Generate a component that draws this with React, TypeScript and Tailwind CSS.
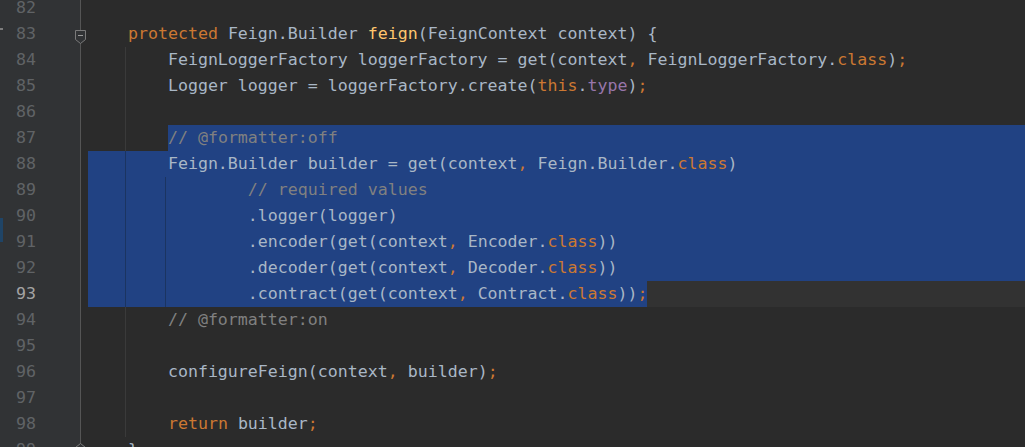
import React from "react";

type Tok = [string, string];
const T = "text-[#a9b7c6]";
const K = "text-[#cc7832]";
const F = "text-[#ffc66d]";
const C = "text-[#808080]";
const P = "text-[#9876aa]";

type Line = {
  n: number;
  toks: Tok[];
  sel?: "full" | "from8" | "upto";
  g1?: boolean;
  g2?: boolean;
  caret?: boolean;
};

const lines: Line[] = [
  { n: 82, toks: [] },
  {
    n: 83,
    toks: [
      ["    ", T],
      ["protected", K],
      [" Feign.Builder ", T],
      ["feign", F],
      ["(FeignContext context) {", T],
    ],
  },
  {
    n: 84,
    g1: true,
    toks: [
      ["        FeignLoggerFactory loggerFactory = get(context", T],
      [",", K],
      [" FeignLoggerFactory.", T],
      ["class", K],
      [")", T],
      [";", K],
    ],
  },
  {
    n: 85,
    g1: true,
    toks: [
      ["        Logger logger = loggerFactory.create(", T],
      ["this", K],
      [".", T],
      ["type", P],
      [")", T],
      [";", K],
    ],
  },
  { n: 86, g1: true, toks: [] },
  { n: 87, g1: true, sel: "from8", toks: [["// @formatter:off", C]] },
  {
    n: 88,
    g1: true,
    sel: "full",
    toks: [
      ["        Feign.Builder builder = get(context", T],
      [",", K],
      [" Feign.Builder.", T],
      ["class", K],
      [")", T],
    ],
  },
  { n: 89, g1: true, g2: true, sel: "full", toks: [["                // required values", C]] },
  { n: 90, g1: true, g2: true, sel: "full", toks: [["                .logger(logger)", T]] },
  {
    n: 91,
    g1: true,
    g2: true,
    sel: "full",
    toks: [
      ["                .encoder(get(context", T],
      [",", K],
      [" Encoder.", T],
      ["class", K],
      ["))", T],
    ],
  },
  {
    n: 92,
    g1: true,
    g2: true,
    sel: "full",
    toks: [
      ["                .decoder(get(context", T],
      [",", K],
      [" Decoder.", T],
      ["class", K],
      ["))", T],
    ],
  },
  {
    n: 93,
    g1: true,
    g2: true,
    sel: "upto",
    caret: true,
    toks: [
      ["                .contract(get(context", T],
      [",", K],
      [" Contract.", T],
      ["class", K],
      ["))", T],
      [";", K],
    ],
  },
  { n: 94, g1: true, toks: [["        // @formatter:on", C]] },
  { n: 95, g1: true, toks: [] },
  {
    n: 96,
    g1: true,
    toks: [
      ["        configureFeign(context", T],
      [",", K],
      [" builder)", T],
      [";", K],
    ],
  },
  { n: 97, g1: true, toks: [] },
  {
    n: 98,
    g1: true,
    toks: [
      ["        ", T],
      ["return", K],
      [" builder", T],
      [";", K],
    ],
  },
  { n: 99, toks: [["    }", T]] },
];

function Toks({ toks }: { toks: Tok[] }) {
  return (
    <>
      {toks.map((t, i) => (
        <span key={i} className={t[1]}>
          {t[0]}
        </span>
      ))}
    </>
  );
}

function Row({ l }: { l: Line }) {
  const selBg = "bg-[#214283]";
  let inner: React.ReactNode;
  if (l.sel === "full") {
    inner = (
      <div className={`flex-1 ${selBg}`}>
        <Toks toks={l.toks} />
      </div>
    );
  } else if (l.sel === "from8") {
    inner = (
      <div className="flex flex-1">
        <span>{"        "}</span>
        <span className={`flex-1 ${selBg}`}>
          <Toks toks={l.toks} />
        </span>
      </div>
    );
  } else if (l.sel === "upto") {
    inner = (
      <div className="flex flex-1 bg-[#323232]">
        <span className={selBg}>
          <Toks toks={l.toks} />
        </span>
      </div>
    );
  } else {
    inner = (
      <div className="flex-1">
        <Toks toks={l.toks} />
      </div>
    );
  }
  const onSel = !!l.sel && l.sel !== "from8";
  return (
    <div className="flex h-[26px] leading-[26px]">
      <div className="relative w-[81px] shrink-0 border-r border-[#555555] bg-[#313335]">
        <div
          className={`w-[36px] text-right ${
            l.caret ? "text-[#a4a3a3]" : "text-[#606366]"
          }`}
        >
          {l.n}
        </div>
        {l.n === 83 && (
          <svg
            className="absolute left-[74px] top-[8px] z-10"
            width="13"
            height="16"
            viewBox="0 0 13 16"
          >
            <path
              d="M1.5 1.5 H11.5 V10.5 L6.5 14.5 L1.5 10.5 Z"
              fill="#313335"
              stroke="#7a7a7a"
              strokeWidth="1"
            />
            <path d="M4 6.5 H9" stroke="#9a9a9a" strokeWidth="1" />
          </svg>
        )}
        {l.n === 99 && (
          <svg
            className="absolute left-[74px] top-[5px] z-10"
            width="13"
            height="16"
            viewBox="0 0 13 16"
          >
            <path
              d="M1.5 14.5 V5.5 L6.5 1.5 L11.5 5.5 V14.5"
              fill="#313335"
              stroke="#7a7a7a"
              strokeWidth="1"
            />
          </svg>
        )}
      </div>
      <div className="relative flex flex-1 whitespace-pre pl-[7px]">
        {inner}
        {l.g1 && (
          <span
            className={`absolute left-[44px] top-0 h-full w-px ${
              onSel || l.n === 88 ? "bg-[#1b3461]" : "bg-[#3a3a3a]"
            }`}
          />
        )}
        {l.g2 && (
          <span className="absolute left-[84px] top-0 h-full w-px bg-[#1b3461]" />
        )}
      </div>
    </div>
  );
}

export default function App() {
  return (
    <div className="relative h-[447px] w-[1025px] overflow-hidden bg-[#2b2b2b] font-['DejaVu_Sans_Mono',monospace] text-[16.6px]">
      <div className="-mt-[5px]">
        {lines.map((l) => (
          <Row key={l.n} l={l} />
        ))}
      </div>
      <div className="absolute left-0 top-[218px] h-[24px] w-[3px] bg-[#1f4466]" />
      <div className="absolute left-0 top-[28px] h-[2px] w-[3px] bg-[#7d7d7d]" />
    </div>
  );
}
